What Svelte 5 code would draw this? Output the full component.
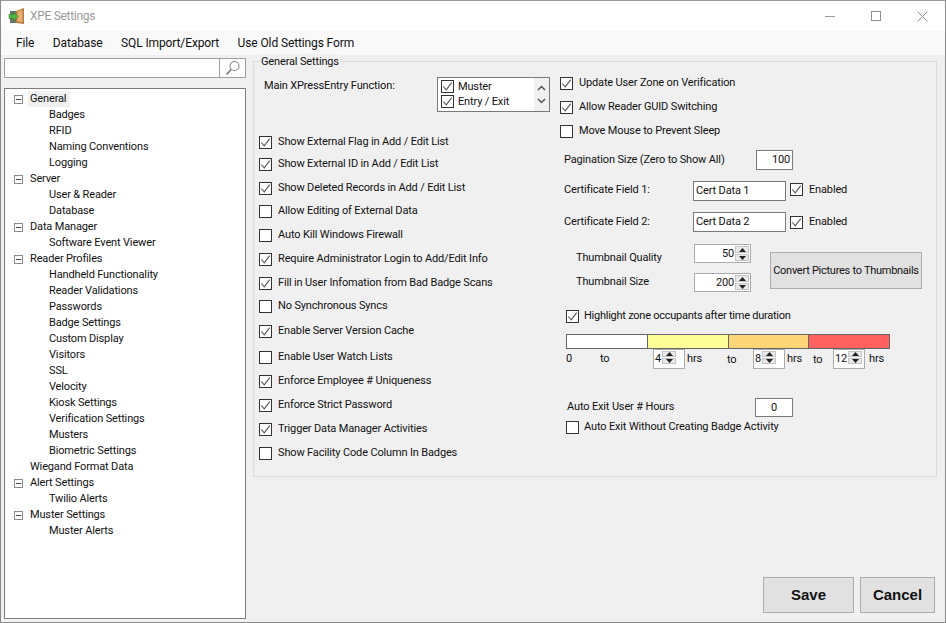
<script>
  const tree = [
    ['General', 0, true, true], ['Badges', 1], ['RFID', 1], ['Naming Conventions', 1], ['Logging', 1],
    ['Server', 0, true], ['User & Reader', 1], ['Database', 1],
    ['Data Manager', 0, true], ['Software Event Viewer', 1],
    ['Reader Profiles', 0, true], ['Handheld Functionality', 1], ['Reader Validations', 1], ['Passwords', 1],
    ['Badge Settings', 1], ['Custom Display', 1], ['Visitors', 1], ['SSL', 1], ['Velocity', 1], ['Kiosk Settings', 1],
    ['Verification Settings', 1], ['Musters', 1], ['Biometric Settings', 1],
    ['Wiegand Format Data', 0], ['Alert Settings', 0, true], ['Twilio Alerts', 1],
    ['Muster Settings', 0, true], ['Muster Alerts', 1]
  ];
  const options = [
    ['Show External Flag in Add / Edit List', true], ['Show External ID in Add / Edit List', true],
    ['Show Deleted Records in Add / Edit List', true], ['Allow Editing of External Data', false],
    ['Auto Kill Windows Firewall', false], ['Require Administrator Login to Add/Edit Info', true],
    ['Fill in User Infomation from Bad Badge Scans', true], ['No Synchronous Syncs', false],
    ['Enable Server Version Cache', true], ['Enable User Watch Lists', false],
    ['Enforce Employee # Uniqueness', true], ['Enforce Strict Password', true],
    ['Trigger Data Manager Activities', true], ['Show Facility Code Column In Badges', false]
  ];
  const top = [['Update User Zone on Verification', true], ['Allow Reader GUID Switching', true], ['Move Mouse to Prevent Sleep', false]];
</script>

{#snippet check(on)}
  <span class="box">
    {#if on}<svg viewBox="0 0 13 13" width="11" height="11"><path d="M1.5 6.5 5 10.5 11.5 2" fill="none" stroke="#555" stroke-width="1.3"/></svg>{/if}
  </span>
{/snippet}

{#snippet spin(value, cls)}
  <span class="spin {cls}">
    <span class="spin-val">{value}</span>
    <span class="arrows">
      <span class="arrow"><svg viewBox="0 0 7 4" width="7" height="4"><path d="M3.5 0 7 4H0z" fill="#222"/></svg></span>
      <span class="arrow"><svg viewBox="0 0 7 4" width="7" height="4"><path d="M0 0h7L3.5 4z" fill="#222"/></svg></span>
    </span>
  </span>
{/snippet}

<div class="window">
  <header class="titlebar">
    <svg class="appicon" viewBox="0 0 18 18" width="18" height="18">
      <path d="M2 4h7v12H2z" fill="#6f7468"/>
      <path d="M8 4 16 1v16l-8-1z" fill="#b97a3a"/>
      <path d="M9.500 4.500 14.500 2.800v12.400l-5-.7z" fill="#e6ae70"/>
      <path d="M1 7.500h4.500V5L10 9.500 5.500 14v-2.500H1z" fill="#54b844" stroke="#2f7d2a" stroke-width=".6"/>
    </svg>
    <span class="title">XPE Settings</span>
    <div class="controls">
      <svg viewBox="0 0 11 11" width="11" height="11"><path d="M0 5.500h10" stroke="#9a9a9a" fill="none"/></svg>
      <svg viewBox="0 0 11 11" width="11" height="11"><rect x=".5" y=".5" width="9" height="9" stroke="#8f8f8f" fill="none"/></svg>
      <svg viewBox="0 0 11 11" width="11" height="11"><path d="M.5.5l10 10M10.500.5l-10 10" stroke="#8f8f8f" fill="none"/></svg>
    </div>
  </header>

  <nav class="menubar">
    <span>File</span><span>Database</span><span>SQL Import/Export</span><span>Use Old Settings Form</span>
  </nav>

  <div class="main">
    <aside class="side">
      <div class="search">
        <span class="search-input"></span>
        <span class="search-btn">
          <svg viewBox="0 0 16 16" width="16" height="16"><circle cx="9.500" cy="6" r="4.500" fill="none" stroke="#8a8a8a" stroke-width="1.100"/><path d="M6.200 9.500 1.500 14.500" stroke="#6a6a6a" stroke-width="1.400" fill="none"/></svg>
        </span>
      </div>
      <div class="tree">
        {#each tree as [label, level, exp, sel]}
          <div class="node" class:child={level === 1}>
            {#if level === 0}
              <span class="exp">{#if exp}<span class="minus"></span>{/if}</span>
            {/if}
            <span class="node-label" class:sel>{label}</span>
          </div>
        {/each}
      </div>
    </aside>

    <section class="group">
      <span class="legend">General Settings</span>
      <div class="col-left">
        <div class="func">
          <span class="func-label">Main XPressEntry Function:</span>
          <div class="checklist">
            <div class="items">
              <div class="item">{@render check(true)}<span>Muster</span></div>
              <div class="item">{@render check(true)}<span>Entry / Exit</span></div>
            </div>
            <div class="scroll">
              <svg viewBox="0 0 9 6" width="9" height="6"><path d="M1 5l3.500-3.500L8 5" fill="none" stroke="#555" stroke-width="1.500"/></svg>
              <svg viewBox="0 0 9 6" width="9" height="6"><path d="M1 1l3.500 3.500L8 1" fill="none" stroke="#555" stroke-width="1.500"/></svg>
            </div>
          </div>
        </div>
        <div class="options">
          {#each options as [label, on]}
            <label class="opt">{@render check(on)}<span>{label}</span></label>
          {/each}
        </div>
      </div>

      <div class="col-right">
        <div class="top-opts">
          {#each top as [label, on]}
            <label class="opt">{@render check(on)}<span>{label}</span></label>
          {/each}
        </div>
        <div class="row pagination">
          <span class="lbl-page">Pagination Size (Zero to Show All)</span>
          <span class="field num page-field">100</span>
        </div>
        <div class="row cert">
          <span class="lbl-cert raised">Certificate Field 1:</span>
          <span class="field cert-field">Cert Data 1</span>
          <label class="opt-inline raised">{@render check(true)}<span>Enabled</span></label>
        </div>
        <div class="row cert cert2">
          <span class="lbl-cert">Certificate Field 2:</span>
          <span class="field cert-field">Cert Data 2</span>
          <label class="opt-inline">{@render check(true)}<span>Enabled</span></label>
        </div>
        <div class="thumbs">
          <div class="thumb-rows">
            <div class="thumb-row"><span class="lbl-thumb down">Thumbnail Quality</span>{@render spin('50', 'wide')}</div>
            <div class="thumb-row"><span class="lbl-thumb up">Thumbnail Size</span>{@render spin('200', 'wide')}</div>
          </div>
          <button class="convert">Convert Pictures to Thumbnails</button>
        </div>
        <label class="opt highlight">{@render check(true)}<span>Highlight zone occupants after time duration</span></label>
        <div class="bar">
          <span class="seg white"></span><span class="seg yellow"></span><span class="seg orange"></span><span class="seg red"></span>
        </div>
        <div class="ranges">
          <span class="r0">0</span><span class="rto">to</span>
          {@render spin('4', 'narrow')}
          <span class="hrs h1">hrs</span><span class="to2">to</span>
          {@render spin('8', 'narrow')}
          <span class="hrs h2">hrs</span><span class="to3">to</span>
          {@render spin('12', 'narrow')}
          <span class="hrs h3">hrs</span>
        </div>
        <div class="row auto">
          <span class="lbl-auto">Auto Exit User # Hours</span>
          <span class="field center auto-field">0</span>
        </div>
        <label class="opt auto-opt">{@render check(false)}<span>Auto Exit Without Creating Badge Activity</span></label>
      </div>
    </section>
  </div>

  <footer class="footer">
    <button class="big save">Save</button>
    <button class="big cancel">Cancel</button>
  </footer>
</div>

<style>
  :global(body) { margin: 0; background: #fff; }
  .window {
    width: 946px; height: 623px; box-sizing: border-box; position: relative; overflow: hidden;
    border: 1px solid #8a8a8a; border-top-color: #9a9a9a;
    background: #f0f0f0; display: flex; flex-direction: column;
    font: 12px/16px Roboto, "Liberation Sans", sans-serif; color: #111;
  }
  .titlebar { height: 30px; flex: none; background: #fff; display: flex; align-items: center; padding-left: 7px; }
  .appicon { flex: none; margin-right: 4px; }
  .title { font-size: 12px; color: #9b9b9b; letter-spacing: -.3px; }
  .controls { margin-left: auto; display: flex; gap: 35px; padding-right: 17px; align-items: center; }
  .menubar { height: 24px; flex: none; background: #f9f9f9; display: flex; align-items: center; padding-left: 15px; gap: 18.500px; letter-spacing: -.12px; }
  .main { display: flex; align-items: flex-start; flex: none; height: 522px; font-size: 11px; letter-spacing: -.15px; }
  .side { width: 242px; margin-left: 3px; flex: none; margin-top: 3px; }
  .search { height: 20px; display: flex; border: 1px solid #a0a0a0; box-sizing: border-box; background: #fff; }
  .search-input { flex: 1; }
  .search-btn { width: 25px; border-left: 1px solid #a0a0a0; display: flex; align-items: center; justify-content: center; }
  .tree { margin-top: 10px; height: 531px; box-sizing: border-box; border: 1px solid #7e7e7e; background: #fff; padding-top: 2px; }
  .node { height: 16px; display: flex; align-items: center; white-space: nowrap; padding-left: 9px; }
  .node.child { padding-left: 43px; }
  .exp { width: 15px; flex: none; display: flex; align-items: center; }
  .minus { width: 9px; height: 9px; box-sizing: border-box; border: 1px solid #8a8a8a; position: relative; display: block; background: linear-gradient(#444, #444) center / 5px 1px no-repeat; }
  .node-label { padding: 0 1px; }
  .node-label.sel { background: #f0f0f0; padding: 0 4px 0 2px; margin-left: -1px; }

  .group {
    margin-left: 7px; margin-top: 6px; width: 684px; height: 416px; box-sizing: border-box;
    border: 1px solid #dcdcdc; position: relative; display: flex;
  }
  .legend { position: absolute; left: 6px; top: -8px; background: #f0f0f0; padding: 0 1px; line-height: 16px; }

  .col-left { width: 306px; flex: none; padding-left: 5px; box-sizing: border-box; }
  .func { display: flex; padding-top: 15px; padding-left: 5px; }
  .func-label { width: 173px; flex: none; margin-top: 1px; }
  .checklist { width: 113px; height: 35px; box-sizing: border-box; border: 1px solid #7a7a7a; background: #fff; display: flex; flex: none; }
  .items { flex: 1; padding: 1px 0 0 3px; }
  .item { display: flex; align-items: center; gap: 4px; height: 15px; }
  .scroll { width: 16px; background: #f0f0f0; border-left: 1px solid #fff; display: flex; flex-direction: column; justify-content: space-around; align-items: center; padding: 3px 0; box-sizing: border-box; }

  .box { width: 13px; height: 13px; box-sizing: border-box; border: 1px solid #333; background: #fff; flex: none; display: inline-flex; align-items: center; justify-content: center; }
  .opt, .opt-inline { display: flex; align-items: center; gap: 6px; white-space: nowrap; }

  .options {
    margin-top: 22px; display: grid;
    grid-template-rows: 16px 22px 24px 23px 24px 24px 24px 23px 25px 26px 24px 24px 24px 24px;
    align-items: end;
  }
  .options .opt { height: 16px; align-self: end; }

  .col-right { flex: 1; padding-left: 0; }
  .top-opts { padding-top: 13px; display: grid; grid-template-rows: 16px 16px 16px; row-gap: 8px; }
  .row { display: flex; align-items: center; }
  .pagination { margin-top: 11px; height: 20px; padding-left: 4px; }
  .lbl-page { width: 192px; flex: none; }
  .field { background: #fff; border: 1px solid #7a7a7a; box-sizing: border-box; height: 20px; display: block; line-height: 18px; padding: 0 2px; }
  .num { text-align: right; }
  .center { text-align: center; }
  .page-field { width: 37px; }
  .cert { margin-top: 11px; padding-left: 4px; height: 20px; }
  .cert2 { margin-top: 11px; }
  .lbl-cert { width: 129px; flex: none; }
  .raised { margin-bottom: 3px; }
  .cert-field { width: 93px; margin-right: 4px; }
  .opt-inline { gap: 6px; }

  .thumbs { display: flex; margin-top: 12px; padding-left: 16px; align-items: flex-start; height: 49px; }
  .thumb-rows { width: 194px; flex: none; }
  .thumb-row { display: flex; align-items: center; height: 19px; }
  .thumb-row + .thumb-row { margin-top: 10px; }
  .lbl-thumb { width: 118px; flex: none; }
  .lbl-thumb.down { margin-top: 9px; }
  .lbl-thumb.up { margin-bottom: 1px; }
  .spin { display: flex; box-sizing: border-box; background: #fff; border: 1px solid #acacac; height: 20px; flex: none; }
  .spin.wide { width: 57px; height: 19px; }
  .spin.narrow { width: 32px; }
  .spin-val { flex: 1; text-align: right; padding-right: 1px; line-height: 18px; }
  .narrow .spin-val { text-align: left; padding-left: 1px; }
  .arrows { width: 15px; flex: none; display: flex; flex-direction: column; gap: 1px; padding: 1px 1px 1px 0; box-sizing: border-box; }
  .arrow { flex: 1; background: #e8e8e8; border: 1px solid #c4c4c4; box-sizing: border-box; display: flex; align-items: center; justify-content: center; min-height: 0; overflow: hidden; }
  .convert { width: 152px; height: 37px; margin-top: 8px; background: #e1e1e1; border: 1px solid #adadad; font: inherit; letter-spacing: -.27px; color: inherit; padding: 0; white-space: nowrap; }
  .highlight { margin-top: 15px; padding-left: 6px; letter-spacing: -.25px; gap: 5px; }
  .bar { display: flex; margin: 10px 0 0 6px; width: 324px; height: 15px; box-sizing: border-box; border: 1px solid #666; background: #666; gap: 1px; }
  .seg { flex: 1; }
  .white { background: #fff; } .yellow { background: #ffff99; } .orange { background: #ffd677; } .red { background: #ff6060; }
  .ranges { display: flex; align-items: center; height: 20px; padding-left: 6px; }
  .ranges span { flex: none; }
  .r0 { width: 34px; }
  .rto { width: 53px; }
  .hrs { margin-left: 2px; }
  .h1 { width: 40px; }
  .h2 { width: 26px; }
  .h3 { margin-left: 4px; }
  .to2 { width: 26px; margin-top: 2px; }
  .to3 { width: 20px; margin-top: 2px; }
  .auto { margin-top: 29px; padding-left: 7px; height: 19px; }
  .lbl-auto { width: 188px; flex: none; margin-bottom: 2px; }
  .auto-field { width: 38px; height: 19px; line-height: 17px; }
  .auto-opt { margin-top: 2px; padding-left: 6px; gap: 5px; }

  .footer { position: absolute; right: 10px; bottom: 9px; display: flex; gap: 6px; }
  .big { height: 36px; background: #e1e1e1; border: 1px solid #adadad; font: bold 15px "Liberation Sans", Arial, sans-serif; color: #111; padding: 0 0 2px; }
  .save { width: 91px; }
  .cancel { width: 75px; }
</style>
